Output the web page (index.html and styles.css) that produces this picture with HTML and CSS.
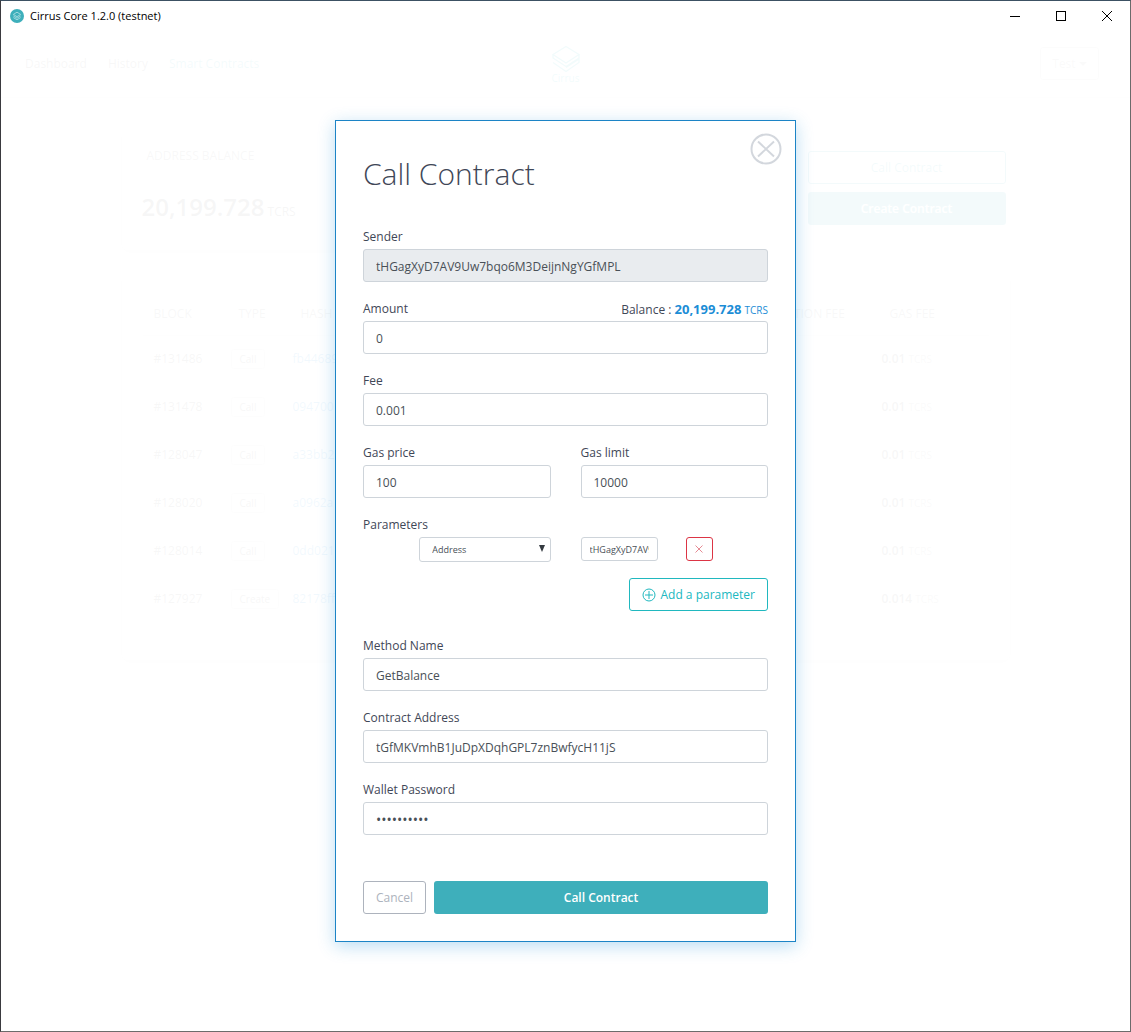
FILE: index.html
```html
<!DOCTYPE html>
<html lang="en">
<head>
<meta charset="utf-8">
<title>Cirrus Core 1.2.0 (testnet)</title>
<link rel="stylesheet" href="styles.css">
</head>
<body>
<div class="window">
  <header class="titlebar">
    <svg class="app-icon" viewBox="0 0 14 14" aria-hidden="true">
      <circle cx="7" cy="7" r="7" fill="#3eafbb"/>
      <path d="M7 3.2 10.6 5.4 7 7.7 3.4 5.4ZM3.4 7 7 9.2 10.6 7M3.4 8.6 7 10.8 10.6 8.6" fill="none" stroke="#b5e2e6" stroke-width=".8"/>
    </svg>
    <span class="app-title">Cirrus Core 1.2.0 (testnet)</span>
    <div class="window-controls">
      <button type="button" aria-label="Minimize"><svg viewBox="0 0 12 12"><path d="M1 6.5H11"/></svg></button>
      <button type="button" aria-label="Maximize"><svg viewBox="0 0 12 12"><path d="M1.5 1.5H10.5V10.5H1.5Z"/></svg></button>
      <button type="button" aria-label="Close window"><svg viewBox="0 0 12 12"><path d="M1 1 11 11M11 1 1 11"/></svg></button>
    </div>
  </header>

  <div class="stage">
    <div class="app">
      <nav class="navbar">
        <div class="nav-links">
          <a href="#dashboard">Dashboard</a>
          <a href="#history">History</a>
          <a href="#contracts" class="active">Smart Contracts</a>
        </div>
        <div class="brand">
          <svg viewBox="0 0 34 28" aria-hidden="true"><path d="M17 1.5 30 9.5 17 18 4 9.5ZM4 9.5V13L17 21.500 30 13V9.500M4 17.500 17 26.500 30 17.500V14L17 22.500" fill="none" stroke="currentColor" stroke-width="1.300"/></svg>
          <span>Cirrus</span>
        </div>
        <button type="button" class="wallet-menu">Test <i class="caret"></i></button>
      </nav>
      <main class="content">
        <section class="summary">
          <div class="panel balance-panel">
            <h2>ADDRESS BALANCE</h2>
            <p><strong>20,199.728</strong> <small>TCRS</small></p>
          </div>
          <div class="actions">
            <button type="button" class="btn outline">Call Contract</button>
            <button type="button" class="btn primary">Create Contract</button>
          </div>
        </section>
        <section class="panel history-panel">
          <table>
            <thead>
              <tr><th class="col-block">BLOCK</th><th class="col-type">TYPE</th><th class="col-hash">HASH</th><th class="col-fee">TRANSACTION FEE</th><th class="col-gas">GAS FEE</th></tr>
            </thead>
            <tbody>
              <tr><td>#131486</td><td><span class="tag">Call</span></td><td><a href="#tx1">fb44689</a></td><td></td><td><b>0.01</b> <small>TCRS</small></td></tr>
              <tr><td>#131478</td><td><span class="tag">Call</span></td><td><a href="#tx2">094700</a></td><td></td><td><b>0.01</b> <small>TCRS</small></td></tr>
              <tr><td>#128047</td><td><span class="tag">Call</span></td><td><a href="#tx3">a33bb2</a></td><td></td><td><b>0.01</b> <small>TCRS</small></td></tr>
              <tr><td>#128020</td><td><span class="tag">Call</span></td><td><a href="#tx4">a0962a</a></td><td></td><td><b>0.01</b> <small>TCRS</small></td></tr>
              <tr><td>#128014</td><td><span class="tag">Call</span></td><td><a href="#tx5">0dd021</a></td><td></td><td><b>0.01</b> <small>TCRS</small></td></tr>
              <tr><td>#127927</td><td><span class="tag">Create</span></td><td><a href="#tx6">82178ff</a></td><td></td><td><b>0.014</b> <small>TCRS</small></td></tr>
            </tbody>
          </table>
        </section>
      </main>
    </div>

    <div class="overlay">
      <form class="dialog" role="dialog" aria-labelledby="dialog-title">
        <button type="button" class="close" aria-label="Close">
          <svg viewBox="0 0 32 32"><circle cx="16" cy="16" r="14.500"/><path d="M8 8.500 24 23.500M24 8.500 8 23.500"/></svg>
        </button>
        <h1 id="dialog-title">Call Contract</h1>

        <div class="field">
          <label for="sender">Sender</label>
          <input id="sender" type="text" value="tHGagXyD7AV9Uw7bqo6M3DeijnNgYGfMPL" readonly>
        </div>
        <div class="field">
          <div class="label-row">
            <label for="amount">Amount</label>
            <span>Balance : <span class="balance"><b>20,199.728</b> <small>TCRS</small></span></span>
          </div>
          <input id="amount" type="text" value="0">
        </div>
        <div class="field">
          <label for="fee">Fee</label>
          <input id="fee" type="text" value="0.001">
        </div>
        <div class="columns">
          <div class="field">
            <label for="gas-price">Gas price</label>
            <input id="gas-price" type="text" value="100">
          </div>
          <div class="field">
            <label for="gas-limit">Gas limit</label>
            <input id="gas-limit" type="text" value="10000">
          </div>
        </div>
        <fieldset class="parameters">
          <legend>Parameters</legend>
          <div class="columns">
            <div class="param-type">
              <select aria-label="Parameter type"><option>Address</option></select>
              <i class="arrow"></i>
            </div>
            <div class="param-value">
              <input type="text" aria-label="Parameter value" value="tHGagXyD7AV9Uw7bqo6M3DeijnNgYGfMPL">
              <button type="button" class="remove" aria-label="Remove parameter"><svg viewBox="0 0 8 8"><path d="M.5.5 7.500 7.500M7.500.5.5 7.500"/></svg></button>
            </div>
          </div>
          <button type="button" class="btn add">
            <svg viewBox="0 0 14 14" aria-hidden="true"><circle cx="7" cy="7" r="6"/><path d="M7 3V11M3 7H11"/></svg>
            Add a parameter
          </button>
        </fieldset>
        <div class="field">
          <label for="method">Method Name</label>
          <input id="method" type="text" value="GetBalance">
        </div>
        <div class="field">
          <label for="contract">Contract Address</label>
          <input id="contract" type="text" value="tGfMKVmhB1JuDpXDqhGPL7znBwfycH11jS">
        </div>
        <div class="field">
          <label for="password">Wallet Password</label>
          <input id="password" type="password" value="abcdefghij">
        </div>
        <div class="dialog-actions">
          <button type="button" class="btn cancel">Cancel</button>
          <button type="submit" class="btn primary">Call Contract</button>
        </div>
      </form>
    </div>
  </div>
</div>
</body>
</html>
```
FILE: styles.css
```css
* { box-sizing: border-box; }

body {
  margin: 0;
  font: 12px/20px "Open Sans", "Noto Sans", sans-serif;
  color: #3f4757;
  background: #fefefe;
}

button, input, select { font: inherit; color: inherit; }
button { padding: 0; background: none; border: 0; cursor: pointer; }
a { color: inherit; text-decoration: none; }
h1, h2, p { margin: 0; }

.window {
  display: flex;
  flex-direction: column;
  min-height: 100vh;
  border: 1px solid #6b6b6b;
  border-top-color: #3c5163;
  border-left-color: #3a3a3f;
}

/* Title bar */
.titlebar {
  display: flex;
  align-items: center;
  height: 29px;
  padding-left: 9px;
  background: #fff;
  color: #000;
}
.app-icon { width: 14px; height: 14px; margin-right: 6px; }
.app-title { font-size: 11px; }
.window-controls { display: flex; margin-left: auto; }
.window-controls button { display: grid; place-items: center; width: 46px; height: 28px; }
.window-controls svg { width: 12px; height: 12px; fill: none; stroke: #000; shape-rendering: crispEdges; }

/* The app and the overlay share one cell */
.stage { display: grid; flex: 1; grid-template-columns: minmax(0, 1fr); }
.app, .overlay { grid-area: 1 / 1; }

.navbar {
  display: grid;
  grid-template-columns: 1fr auto 1fr;
  align-items: center;
  height: 68px;
  padding: 0 31px;
  border-bottom: 1px solid #eee;
}
.nav-links { display: flex; gap: 21px; margin-left: -7px; color: #777; }
.nav-links .active { color: #3eafbb; }
.brand { display: flex; flex-direction: column; align-items: center; color: #20b8bf; font-size: 10px; line-height: 10px; }
.brand svg { width: 34px; height: 28px; }
.wallet-menu {
  justify-self: end;
  width: 59px;
  height: 33px;
  border: 1px solid #ccc;
  border-radius: 3px;
  color: #aaa;
}
.caret {
  display: inline-block;
  border: 4px solid transparent;
  border-top-color: currentColor;
  border-bottom: 0;
  vertical-align: middle;
}

.content { max-width: 888px; margin: 0 auto; padding: 30px 0; }
.summary { display: grid; grid-template-columns: 1fr 202px; gap: 20px; margin-bottom: 22px; }
.panel { border: 1px solid #f0f0f0; border-radius: 6px; box-shadow: 0 2px 10px rgba(0, 0, 0, .15); }
.balance-panel { height: 122px; padding: 17px 19px; }
.balance-panel h2 { margin: 0 0 24px 5px; font-size: 12px; font-weight: 400; line-height: 20px; color: #888; }
.balance-panel p { line-height: 34px; color: #666; }
.balance-panel strong { font-size: 24px; font-weight: 600; }
.balance-panel small { font-size: 12px; }
.actions { display: flex; flex-direction: column; gap: 8px; padding: 23px 4px 0 0; }

.history-panel { padding: 20px; min-height: 388px; }
table { width: 100%; border-collapse: collapse; table-layout: fixed; }
th, td { padding: 0 0 0 11px; text-align: left; font-weight: 400; }
th { height: 42px; border-bottom: 1px solid #e8e8e8; color: #888; }
td { height: 48px; color: #777; }
td:nth-child(2), td:nth-child(3), td:nth-child(5) { padding-left: 3px; }
td a { color: #1c8dd6; }
td b { font-weight: 600; }
td small { font-size: 10px; color: #aaa; }
.col-block { width: 85px; }
.col-type { width: 62px; }
.col-fee { width: 148px; }
.col-gas { width: 110px; }
.tag { padding: 2px 8px; background: #f4f4f4; border: 1px solid #ddd; border-radius: 3px; font-size: 10px; }

/* Buttons */
.btn { height: 33px; padding: 0 12px; border: 1px solid transparent; border-radius: 3px; }
.outline { border-color: #3eafbb; color: #3eafbb; }
.primary { background: #3eafbb; color: #fff; font-weight: 600; }
.cancel { border-color: #adb3bd; color: #adb3bd; }

/* Dialog */
.overlay { padding: 90px 16px 60px; background: rgba(255, 255, 255, .94); }
.dialog {
  position: relative;
  max-width: 461px;
  margin: 0 auto;
  padding: 27px;
  background: #fff;
  border: 1px solid #1c84c6;
  box-shadow: 0 4px 16px rgba(28, 141, 214, .3);
}
.dialog h1 { margin-bottom: 26px; font-size: 30px; font-weight: 300; line-height: 52px; }
.close { position: absolute; top: 12px; right: 13px; width: 32px; height: 32px; }
.close svg { display: block; fill: none; stroke: #d3d7dd; stroke-width: 2; }

.field { display: flex; flex-direction: column; gap: 1px; margin-bottom: 16px; line-height: 22px; }
.label-row { display: flex; justify-content: space-between; height: 22px; }
.balance { color: #1c8dd6; }
.balance b { font-size: 13px; }
.balance small { font-size: 10px; }

input, select {
  width: 100%;
  min-width: 0;
  height: 33px;
  padding: 1px 12px 0;
  background: #fff;
  border: 1px solid #ced4da;
  border-radius: 3px;
  color: #495057;
}
input[readonly] { background: #e9ecef; }
input[type="password"] { font-size: 14px; }
.columns { display: grid; grid-template-columns: 1fr 1fr; gap: 30px; }

.parameters { display: flex; flex-direction: column; margin: 0 0 24px; padding: 0; border: 0; }
.parameters legend { padding: 0; margin-bottom: 1px; line-height: 22px; }
.param-type { position: relative; justify-self: end; width: 70%; }
.param-type select { display: block; height: 25px; font-size: 9px; appearance: none; }
.arrow {
  position: absolute;
  top: 8px;
  right: 6px;
  border: 3px solid transparent;
  border-top: 7px solid #343a40;
  border-bottom: 0;
  pointer-events: none;
}
.param-value { display: flex; gap: 28px; }
.param-value input { width: 77px; height: 24px; padding: 0 8px; font-size: 9px; }
.remove { display: grid; place-items: center; width: 27px; height: 24px; border: 1px solid #dc3545; border-radius: 3px; }
.remove svg { width: 8px; height: 8px; stroke: #e58a93; fill: none; }
.add { display: flex; align-items: center; gap: 4px; align-self: flex-end; margin-top: 16px; border-color: #20b8bf; color: #20b8bf; }
.add svg { width: 14px; height: 14px; fill: none; stroke: currentColor; }

.dialog-actions { display: flex; gap: 8px; margin-top: 46px; }
.dialog-actions .primary { flex: 1; }
```
